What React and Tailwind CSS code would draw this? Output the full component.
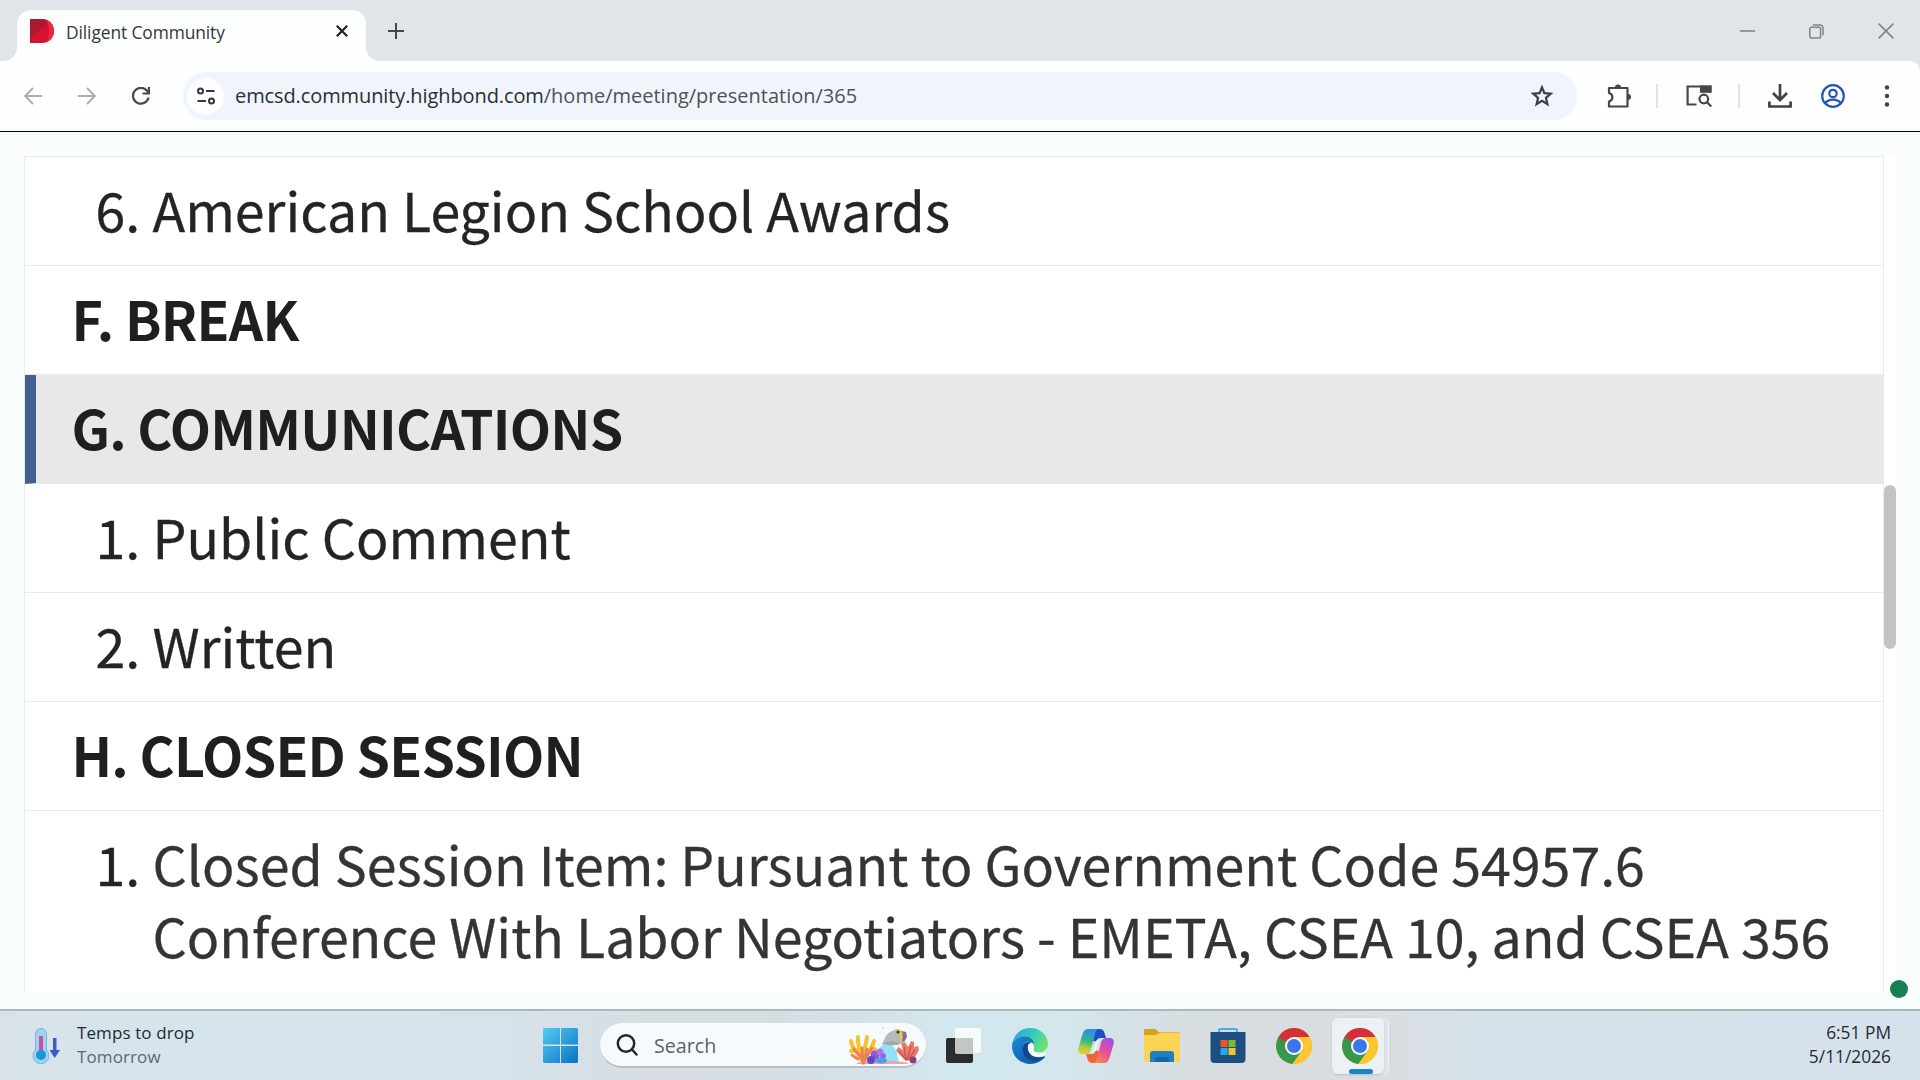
import { useId } from 'react';

const AGENDA = [
  { num: '6.', title: ['American Legion School Awards'] },
  { num: 'F.', title: ['BREAK'], section: true },
  { num: 'G.', title: ['COMMUNICATIONS'], section: true, active: true },
  { num: '1.', title: ['Public Comment'] },
  { num: '2.', title: ['Written'] },
  { num: 'H.', title: ['CLOSED SESSION'], section: true },
  {
    num: '1.',
    title: [
      'Closed Session Item: Pursuant to Government Code 54957.6',
      'Conference With Labor Negotiators - EMETA, CSEA 10, and CSEA 356',
    ],
    muted: true,
  },
];

function TabStrip() {
  return (
    <div className="flex h-[61px] items-end bg-[#dfe5e9]">
      <div className="relative ml-[17px] flex h-[51px] w-[349px] items-center rounded-t-[14px] bg-[#fdfefe] pl-[13px] pr-[18px]">
        <svg className="absolute -left-[14px] bottom-0 size-[14px]" viewBox="0 0 14 14" fill="#fdfefe"><path d="M14 0v14H0A14 14 0 0 0 14 0z" /></svg>
        <svg className="absolute -right-[14px] bottom-0 size-[14px]" viewBox="0 0 14 14" fill="#fdfefe"><path d="M0 0v14h14A14 14 0 0 1 0 0z" /></svg>
        <svg className="mb-[9px] size-6" viewBox="0 0 24 24">
          <path d="M0 0h12a12 12 0 0 1 0 24H0z" fill="#d3132f" />
          <path d="M0 0h12c3 0 5.500 1 7 2.500L0 20z" fill="#a81a30" />
          <path d="M16 .7a12 12 0 0 1 0 22.600C20 16 20 8 16 .7z" fill="#e8283f" />
        </svg>
        <span className="mb-[7px] ml-[12px] flex-1 whitespace-nowrap text-[17.400px] tracking-[-0.100px] text-[#33373b]">Diligent Community</span>
        <svg className="mb-[9px] size-3" viewBox="0 0 12 12" stroke="#1f2224" strokeWidth="2.200"><path d="M.8.8l10.400 10.400M11.200.8L.8 11.200" /></svg>
      </div>
      <svg className="mb-[22px] ml-[22px] size-4" viewBox="0 0 16 16" stroke="#43474a" strokeWidth="2"><path d="M8 0v16M0 8h16" /></svg>
      <div className="mb-[22px] ml-auto mr-[26px] flex items-center gap-[54px]">
        <svg className="size-[15px]" viewBox="0 0 15 15" stroke="#7f8486" strokeWidth="1.600"><path d="M0 7h15" /></svg>
        <svg className="size-[15px]" viewBox="0 0 15 15" fill="none" stroke="#7f8486" strokeWidth="1.500">
          <rect x=".8" y="3.300" width="10.800" height="10.800" rx="1.800" />
          <path d="M3.800.9h7.200a3 3 0 0 1 3 3v7.400" />
        </svg>
        <svg className="size-[16px]" viewBox="0 0 16 16" stroke="#7f8486" strokeWidth="1.500"><path d="M.6.6l14.800 14.800M15.400.6L.6 15.400" /></svg>
      </div>
    </div>
  );
}

function Toolbar() {
  return (
    <div className="flex h-[70px] items-center rounded-tr-[10px] bg-[#fdfefe]">
      <svg className="ml-[24px] size-[18px]" viewBox="0 0 18 18" fill="none" stroke="#a9adaf" strokeWidth="1.900"><path d="M18 9H1.500M9 1L1.200 9 9 17" /></svg>
      <svg className="ml-[36px] size-[18px]" viewBox="0 0 18 18" fill="none" stroke="#a9adaf" strokeWidth="1.900"><path d="M0 9h16.500M9 1l7.800 8L9 17" /></svg>
      <svg className="ml-[36px] size-[18px]" viewBox="0 0 18 18" fill="none" stroke="#45494b" strokeWidth="2.200">
        <path d="M16.600 10.500A7.900 7.900 0 1 1 14.800 3.500L17 6" />
        <path d="M17 0v6.500h-6.500" />
      </svg>
      <div className="ml-[33px] flex h-[48px] w-[1394px] items-center rounded-full bg-[#f0f5fb] pl-[4px] pr-[24px]">
        <div className="flex size-[37px] items-center justify-center rounded-full bg-[#fdfeff]">
          <svg className="size-[18px]" viewBox="0 0 18 18" fill="none" stroke="#34383b" strokeWidth="2">
            <circle cx="3.500" cy="4" r="2.500" />
            <circle cx="14.500" cy="14" r="2.500" />
            <path d="M9 4h8.500M.5 14H9" />
          </svg>
        </div>
        <span className="ml-[11px] flex-1 whitespace-nowrap text-[20px] tracking-[-0.100px] text-[#2a2f33]">
          emcsd.community.highbond.com<span className="tracking-normal text-[#4c5257]">/home/meeting/presentation/365</span>
        </span>
        <svg className="size-[22px]" viewBox="0 0 22 22" fill="none" stroke="#3a3e46" strokeWidth="2.200">
          <path d="M11 2.300l2.400 5.900 6.300.5-4.800 4.100 1.500 6.300L11 15.700l-5.400 3.400 1.500-6.300L2.300 8.700l6.300-.5z" />
        </svg>
      </div>
      <svg className="ml-[30px] size-6" viewBox="0 0 24 24" fill="none" stroke="#43474a" strokeWidth="2.200" strokeLinejoin="round">
        <path d="M2 4h18.500v18.500H2v-5c4.500-1.500 4.500-7 0-8.500z" />
        <path d="M8 3.500a3 3 0 0 1 6 0zM21 10a3 3 0 0 1 0 6z" fill="#43474a" stroke="none" />
      </svg>
      <div className="ml-[25px] h-[24px] w-[2px] bg-[#dde3ec]" />
      <svg className="ml-[28px] h-[22px] w-[26px]" viewBox="0 0 26 22" fill="none" stroke="#43474a" strokeWidth="2.200">
        <path d="M10.500 19.500H1.600V1.500h22.800v6" />
        <path d="M14 .5h11.500v7.300H14z" fill="#43474a" stroke="none" />
        <circle cx="17.800" cy="14" r="4.300" />
        <path d="M20.800 17l4.500 4.500" />
      </svg>
      <div className="ml-[26px] h-[24px] w-[2px] bg-[#dde3ec]" />
      <svg className="ml-[28px] size-6" viewBox="0 0 24 24" fill="none" stroke="#3f4346" strokeWidth="2.700">
        <path d="M12 0v15M5 9l7 7 7-7M1.400 17.500v5h21.200v-5" />
      </svg>
      <svg className="ml-[29px] size-6" viewBox="0 0 24 24" fill="none" stroke="#2557b8" strokeWidth="2.200">
        <circle cx="12" cy="12" r="10.800" />
        <circle cx="12" cy="9.500" r="3.700" />
        <path d="M4.200 19c4-4.500 11.600-4.500 15.600 0" />
      </svg>
      <svg className="ml-[39px] h-[22px] w-[6px]" viewBox="0 0 6 22" fill="#3f4346">
        <circle cx="3" cy="2.400" r="2.200" />
        <circle cx="3" cy="11" r="2.200" />
        <circle cx="3" cy="19.500" r="2.200" />
      </svg>
    </div>
  );
}

function AgendaRow({ num, title, section, active, muted }) {
  const base = 'flex shrink-0 border-b border-[#e8eaec] pt-4 pb-5 text-[53.700px] leading-[72px] whitespace-nowrap last:border-b-0';
  if (section) {
    return (
      <div className={`${base} font-semibold tracking-[-0.780px] text-[#1f1f1f] ${active ? 'border-l-[11px] border-l-[#445f92] border-b-[#e8e8e8] bg-[#e8e8e8] pl-[35.500px]' : 'pl-[46.500px]'}`}>
        {num} {title[0]}
      </div>
    );
  }
  return (
    <div className={`${base} pl-[70.500px] text-[#242424] [-webkit-text-stroke:0.300px]`}>
      <span className="w-[57px]">{num}</span>
      <div className={muted ? 'text-[#343434]' : ''}>
        {title.map((line) => <div key={line}>{line}</div>)}
      </div>
    </div>
  );
}

function ChromeIcon() {
  return (
    <svg className="size-9" viewBox="0 0 36 36">
      <circle cx="18" cy="18" r="18" fill="#fbc62f" />
      <path d="M18 18L2.400 9a18 18 0 0 0 13.800 26.900L26 22.500z" fill="#35984b" />
      <path d="M2.400 9a18 18 0 0 1 31.200 0H18l-7.800 13.500z" fill="#d3303a" />
      <path d="M2.400 9l7.800 13.500 7.800-4.500z" fill="#35984b" />
      <path d="M25.800 22.500L18 36a18 18 0 0 0 15.600-27H18z" fill="#fbc62f" />
      <circle cx="18" cy="18" r="9" fill="#fff" />
      <circle cx="18" cy="18" r="7" fill="#3a78e7" />
    </svg>
  );
}

function WindowsIcon() {
  const id = useId();
  return (
    <svg className="size-[35px]" viewBox="0 0 35 35">
      <linearGradient id={id} gradientUnits="userSpaceOnUse" x1="0" y1="0" x2="35" y2="35">
        <stop stopColor="#53cbf1" />
        <stop offset="1" stopColor="#0873c4" />
      </linearGradient>
      <path d="M1 0h16v16.600H0V1zM18 0h16l1 1v15.600H18zM0 18h17v17H1l-1-1zM18 18h17v16l-1 1H18z" fill={`url(#${id})`} />
    </svg>
  );
}

function ReefIcon() {
  return (
    <svg className="h-[40px] w-[72px]" viewBox="0 0 72 40">
      <path d="M24 38c2-10 8-19 15-19s9 4 12 19z" fill="#8fe3f5" />
      <path d="M8 38c14-3 42-3 52 0v1H10z" fill="#e9a7b0" />
      <g fill="none" strokeLinecap="round">
        <path d="M14 36C12 28 4 26 3 16M14 36c-1-12-5-13-4-24M15 36c0-12 3-14 4-24M16 36c2-9 8-10 10-20M8 25l-5 1M21 25l6-1" stroke="#f3c22c" strokeWidth="4" />
        <path d="M15 38c-1-8-6-9-9-14M16 38c1-8 6-9 8-15M15 38l-1-15M10 34l-6-4M16 36l3-12" stroke="#ee8058" strokeWidth="2.800" />
      </g>
      <circle cx="27" cy="30" r="4.500" fill="#8f57d8" />
      <circle cx="32" cy="27" r="3.500" fill="#a97ae6" />
      <circle cx="23" cy="35" r="4" fill="#6248c0" />
      <circle cx="35" cy="31" r="3" fill="#9a66dc" />
      <ellipse cx="33" cy="35.500" rx="6" ry="3" fill="#4b9ee6" />
      <path d="M58 36l-10-10 2-4 5 3-2-7 4-1 3 5 3-6 3 1v5l4-1 1 4-5 9z" fill="#ea7a6b" />
      <path d="M58 35l-7-9M58 35l-2-13M59 35l4-14M60 35l7-10" stroke="#c94f4d" strokeWidth="1.200" />
      <circle cx="65" cy="35" r="3.500" fill="#84407c" />
      <path d="M34 19c3-5 3-9 8-12 5-3 11-3 14 2 2 4 0 8-4 10-5 2-12 1-18 0z" fill="#b3babd" />
      <path d="M34 19c6-2 10-4 14-1.500l4 1.500c-5 2-12 1-18 0z" fill="#a0a7ab" />
      <path d="M46 4.500c4-1.500 8 0 10 4l-1 7-3 2c1-5-1-9-6-13z" fill="#e0c84a" />
      <circle cx="50" cy="7" r="1.600" fill="#333a44" />
      <path d="M54 6l4 1 1 5-3 5-2-1c1-3 1-6 0-10z" fill="#7d6aa6" />
      <circle cx="35" cy="3" r="1.500" fill="#dcebf2" />
      <circle cx="32" cy="7" r="1.500" fill="#e2eff5" />
    </svg>
  );
}

function TaskViewIcon() {
  return (
    <svg className="size-9" viewBox="0 0 36 36">
      <rect x="9" y="0" width="26" height="25" rx="2" fill="#f7fafb" />
      <rect x="0" y="10" width="27" height="25" rx="2" fill="#2a2c2d" />
      <path d="M9 10h18v16H11a2 2 0 0 1-2-2z" fill="#c3c6c4" />
    </svg>
  );
}

function EdgeIcon() {
  const id = useId();
  return (
    <svg className="size-9" viewBox="0 0 36 36">
      <defs>
        <linearGradient id={`${id}a`} x1="0" y1=".2" x2="1" y2=".6">
          <stop stopColor="#2ba6dd" />
          <stop offset=".5" stopColor="#35c9c2" />
          <stop offset="1" stopColor="#6ee667" />
        </linearGradient>
        <linearGradient id={`${id}b`} x1="0" y1="0" x2="1" y2="1">
          <stop stopColor="#1b88d6" />
          <stop offset="1" stopColor="#0c4f9c" />
        </linearGradient>
      </defs>
      <path d="M0 17C1 7 9 0 18 0c11 0 18 8 18 15.500 0 6-4.500 9-9.500 9-4 0-6-1.500-5-3.500 1.500-2.500 0-7-5.500-7C9 14 2 16 0 17z" fill={`url(#${id}a)`} />
      <path d="M0 18c1-6 7-9.500 12.500-9.500 5.500 0 9.500 3.500 9.500 8-1-2-3-3-5-3-5 0-7 5-5 10 2.500 6 9.500 8.500 17 6.500 2-.5 3-1.500 4-1C30 33 24 36 18 36 8 36 0 28 0 18z" fill={`url(#${id}b)`} />
      <path d="M11.500 17c-3 8 2 15 10 15.500 5 .3 9-1.500 11.800-4.500-6 2.500-13 1.500-16-3.500-2-3.500-1-8 2-10-3-1.500-6.500 0-7.800 2.500z" fill="#13468c" />
      <path d="M16.500 16c2-2 6 0 5.500 3-.5 2-1 3 .5 4.300 2.500 2 8 2.200 12 .7-1 3-3 4-5 4.500-5 1-10.500-.5-12.500-4.500-1.500-3-1.500-6.500-.5-8z" fill="#f2fafc" />
    </svg>
  );
}

function CopilotIcon() {
  const id = useId();
  return (
    <svg className="h-[34px] w-9" viewBox="0 0 36 34">
      <defs>
        <linearGradient id={`${id}a`} x1=".4" y1="0" x2=".2" y2="1">
          <stop stopColor="#2b8fe8" />
          <stop offset=".45" stopColor="#35b58a" />
          <stop offset=".75" stopColor="#b9d03a" />
          <stop offset="1" stopColor="#f3c52e" />
        </linearGradient>
        <linearGradient id={`${id}b`} x1=".8" y1="0" x2=".2" y2="1">
          <stop stopColor="#9a50e0" />
          <stop offset=".5" stopColor="#e84f9f" />
          <stop offset="1" stopColor="#f98a4a" />
        </linearGradient>
      </defs>
      <path d="M15 0h7c2.500 0 4 2 4.500 4l1.500 5h-5c-2.500 0-4 1-4.700 3.500L15 12z" fill="#1d4fc4" />
      <path d="M21 34h-7c-2.500 0-4-2-4.500-4L8 25h5c2.500 0 4-1 4.700-3.500L21 22z" fill="#f0643c" />
      <path d="M10 0h11c-2.500 0-3.300 2.500-4 5l-4 15.500c-.8 3-2.500 4.500-5 4.500H4c-3 0-4.500-3-3.600-6L4.500 5C5.500 2 7 0 10 0z" fill={`url(#${id}a)`} />
      <path d="M26 34H15c2.500 0 3.300-2.500 4-5l4-15.500c.8-3 2.500-4.500 5-4.500h4c3 0 4.500 3 3.600 6L31.500 29c-1 3-2.500 5-5.500 5z" fill={`url(#${id}b)`} />
      <path d="M18 12l3.500-2.500-3.800 12-3.500 3z" fill="#eef4f6" />
    </svg>
  );
}

function FolderIcon() {
  return (
    <svg className="h-[33px] w-9" viewBox="0 0 36 33">
      <path d="M0 1.500A1.500 1.500 0 0 1 1.500 0H11c1.500 0 2.500 3 4 3h19a2 2 0 0 1 2 2v8H0z" fill="#d3a21f" />
      <path d="M0 6h12c2 0 2.500-2.500 4.500-2.500H34a2 2 0 0 1 2 2V31a2 2 0 0 1-2 2H2a2 2 0 0 1-2-2z" fill="#fbd454" />
      <path d="M6 33v-8a3 3 0 0 1 3-3h18a3 3 0 0 1 3 3v8z" fill="#1e7fc4" />
      <path d="M11 33v-3a2 2 0 0 1 2-2h10a2 2 0 0 1 2 2v3z" fill="#1566a6" />
    </svg>
  );
}

function StoreIcon() {
  return (
    <svg className="h-[35px] w-9" viewBox="0 0 36 35">
      <path d="M9 5V2.500A1.500 1.500 0 0 1 10.500 1h15A1.500 1.500 0 0 1 27 2.500V5" fill="none" stroke="#3bb1e6" strokeWidth="2" />
      <path d="M.5 4h35v27a4 4 0 0 1-4 4h-27a4 4 0 0 1-4-4z" fill="#1c4f80" />
      <path d="M10.500 12h7v7h-7z" fill="#f05427" />
      <path d="M18.500 12h7v7h-7z" fill="#7dbb28" />
      <path d="M10.500 20h7v7h-7z" fill="#27a8ea" />
      <path d="M18.500 20h7v7h-7z" fill="#fcc02b" />
    </svg>
  );
}

function WeatherIcon() {
  return (
    <svg className="h-[36px] w-[28px]" viewBox="0 0 28 36">
      <path d="M3.500 6a5.500 5.500 0 0 1 11 0v16a8 8 0 1 1-11 0z" fill="#9ad3f3" stroke="#7fb4d8" />
      <path d="M7 8h4v16H7z" fill="#c5529a" />
      <circle cx="9" cy="27" r="5" fill="#1d93dc" />
      <path d="M21 10h3.500v12H28l-5.300 8-5.200-8H21z" fill="#4157cf" />
    </svg>
  );
}

function Taskbar() {
  return (
    <div className="flex h-[71px] items-center border-t-2 border-[#a9b8c1] bg-[linear-gradient(90deg,#d9e2e9_0%,#d6e4eb_8%,#d6e3ea_26%,#d7dde3_34%,#d6dde3_40%,#d2e8ee_50%,#d3e6ec_56%,#d8dde1_62%,#dadde1_72%,#d6e2ea_77%,#d6e2eb_100%)]">
      <div className="flex w-[543px] items-center pl-[32px]">
        <WeatherIcon />
        <div className="mb-[2px] ml-[17px] text-[17px] leading-[24px] tracking-[0.100px]">
          <div className="text-[#1c2a33]">Temps to drop</div>
          <div className="text-[#5b6972]">Tomorrow</div>
        </div>
      </div>
      <WindowsIcon />
      <div className="ml-[22px] flex h-[45px] w-[326px] items-center rounded-full border-b-2 border-[#b7bfc6] bg-[#f7fafd] pl-[16px] pr-[6px]">
        <svg className="mt-px size-[22px]" viewBox="0 0 22 22" fill="none" stroke="#24272a" strokeWidth="2.500" strokeLinecap="round"><circle cx="10" cy="9.500" r="8.200" /><path d="M16 15.500l4.500 5" /></svg>
        <span className="mt-[2px] ml-[16px] flex-1 text-[19.700px] text-[#5c6368]">Search</span>
        <ReefIcon />
      </div>
      <div className="ml-[20px] flex items-center gap-[30px]">
        <TaskViewIcon />
        <EdgeIcon />
        <CopilotIcon />
        <FolderIcon />
        <StoreIcon />
        <ChromeIcon />
      </div>
      <div className="relative ml-[20px] flex h-[56px] w-[57px] rounded-[6px] border-r border-[#eef2f5] bg-[#dfe5ea]">
        <div className="flex w-[52px] items-center justify-center rounded-[6px] bg-[#edf1f5] pl-[3px] shadow-sm"><ChromeIcon /></div>
        <div className="absolute bottom-0 left-[17px] h-[5px] w-[24px] rounded-full bg-[#1a84c2]" />
      </div>
      <div className="mb-[3px] ml-auto mr-[29px] text-right text-[17.350px] leading-[24px] text-[#1f2a33]">
        <div>6:51 PM</div>
        <div>5/11/2026</div>
      </div>
    </div>
  );
}

export default function App() {
  return (
    <div className="flex h-[1080px] w-[1920px] flex-col overflow-hidden bg-[#dfe5e9] font-['Open_Sans','Noto_Sans',sans-serif]">
      <TabStrip />
      <Toolbar />
      <div className="relative flex h-[878px] border-t border-black bg-[#fafdfe] pt-[24px] pl-[24px]">
        <div className="flex h-[836px] w-[1860px] flex-col overflow-hidden border-x border-t border-[#e8ecee] bg-white font-['Noto_Sans_CJK_JP','Noto_Sans_CJK_SC',sans-serif]">
          {AGENDA.map((item, i) => <AgendaRow key={i} {...item} />)}
        </div>
        <div className="h-[836px] w-[12px] bg-white pt-[329px]">
          <div className="h-[164px] rounded-full bg-[#c3c3c4]" />
        </div>
        <div className="absolute right-[12px] bottom-[11px] size-[18px] rounded-full bg-[#168052]" />
      </div>
      <Taskbar />
    </div>
  );
}
